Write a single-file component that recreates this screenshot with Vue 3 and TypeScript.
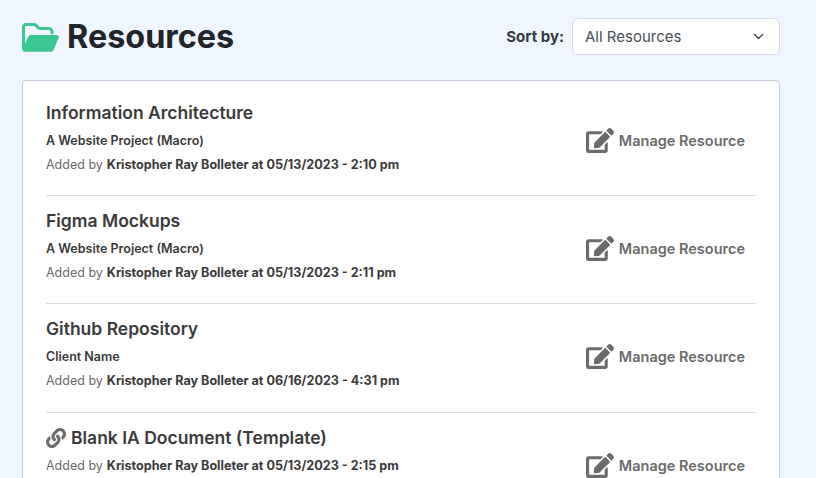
<script setup lang="ts">
interface Item { title: string; sub?: string; by: string; link?: boolean }
const items: Item[] = [
  { title: 'Information Architecture', sub: 'A Website Project (Macro)', by: 'Kristopher Ray Bolleter at 05/13/2023 - 2:10 pm' },
  { title: 'Figma Mockups', sub: 'A Website Project (Macro)', by: 'Kristopher Ray Bolleter at 05/13/2023 - 2:11 pm' },
  { title: 'Github Repository', sub: 'Client Name', by: 'Kristopher Ray Bolleter at 06/16/2023 - 4:31 pm' },
  { title: 'Blank IA Document (Template)', by: 'Kristopher Ray Bolleter at 05/13/2023 - 2:15 pm', link: true },
]
</script>

<template>
  <div class="page">
    <header class="head">
      <h1 class="title">
        <svg class="folder" viewBox="0 0 37 29">
          <path class="folder-tab" d="M1.5 25V4a2.5 2.5 0 0 1 2.5-2.5h8a3 3 0 0 1 2.1.9l2.3 2.3a3 3 0 0 0 2.1.9H27a3 3 0 0 1 3 3V10"/>
          <path class="folder-front" d="M9 12h25.5c1.6 0 2.8 1.6 2.2 3.1l-5.2 12c-.4 1-1.3 1.7-2.3 1.7H3c-2.1 0-3.2-1.9-2.3-3.5L6.3 13.6c.5-1 1.5-1.6 2.7-1.6z"/>
        </svg>
        Resources
      </h1>
      <div class="sort">
        <label class="sort-label">Sort by:</label>
        <div class="select">
          <span>All Resources</span>
          <svg class="chev" viewBox="0 0 16 16"><path d="M3 5.5 8 10.5l5-5" fill="none" stroke="#495057" stroke-width="1.8" stroke-linecap="round" stroke-linejoin="round"/></svg>
        </div>
      </div>
    </header>
    <section class="card">
      <article v-for="item in items" :key="item.title" class="row">
        <div class="info">
          <h2 class="name">
            <svg v-if="item.link" class="link" viewBox="0 0 512 512"><path d="M326.612 185.391c59.747 59.809 58.927 155.698.36 214.59-.11.12-.24.25-.36.37l-67.2 67.2c-59.27 59.27-155.699 59.262-214.96 0-59.27-59.26-59.27-155.7 0-214.96l37.106-37.106c9.84-9.84 26.786-3.3 27.294 10.606.648 17.722 3.826 35.527 9.69 52.721 1.986 5.822.567 12.262-3.783 16.612l-13.087 13.087c-28.026 28.026-28.905 73.66-1.155 101.96 28.024 28.579 74.086 28.749 102.325.51l67.2-67.19c28.191-28.191 28.073-73.757 0-101.83-3.701-3.694-7.429-6.564-10.341-8.569a16.037 16.037 0 0 1-6.947-12.606c-.396-10.567 3.348-21.456 11.698-29.806l21.054-21.055c5.521-5.521 14.182-6.199 20.584-1.731a152.482 152.482 0 0 1 20.522 17.197zM467.547 44.449c-59.261-59.262-155.69-59.27-214.96 0l-67.2 67.2c-.12.12-.25.25-.36.37-58.566 58.892-59.387 154.781.36 214.59a152.454 152.454 0 0 0 20.521 17.196c6.402 4.468 15.064 3.789 20.584-1.731l21.054-21.055c8.35-8.35 12.094-19.239 11.698-29.806a16.037 16.037 0 0 0-6.947-12.606c-2.912-2.005-6.64-4.875-10.341-8.569-28.073-28.073-28.191-73.639 0-101.83l67.2-67.19c28.239-28.239 74.3-28.069 102.325.51 27.75 28.3 26.872 73.934-1.155 101.96l-13.087 13.087c-4.35 4.35-5.769 10.79-3.783 16.612 5.864 17.194 9.042 34.999 9.69 52.721.509 13.906 17.454 20.446 27.294 10.606l37.106-37.106c59.271-59.259 59.271-155.699.001-214.959z"/></svg>
            {{ item.title }}
          </h2>
          <p v-if="item.sub" class="sub">{{ item.sub }}</p>
          <p class="added"><span class="added-by">Added by</span><strong>{{ item.by }}</strong></p>
        </div>
        <a class="manage">
          <svg class="edit" viewBox="0 0 576 512"><path d="M402.6 83.2l90.2 90.2c3.8 3.8 3.8 10 0 13.8L274.4 405.6l-92.8 10.3c-12.4 1.4-22.9-9.1-21.5-21.5l10.3-92.8L388.8 83.2c3.8-3.8 10-3.8 13.8 0zm162-22.9l-48.8-48.8c-15.2-15.2-39.9-15.2-55.2 0l-35.4 35.4c-3.8 3.8-3.8 10 0 13.8l90.2 90.2c3.8 3.8 10 3.8 13.8 0l35.4-35.4c15.2-15.3 15.2-40 0-55.2zM384 346.2V448H64V128h229.8c3.2 0 6.2-1.3 8.5-3.5l40-40c7.6-7.6 2.2-20.5-8.5-20.5H48C21.5 64 0 85.5 0 112v352c0 26.5 21.5 48 48 48h352c26.5 0 48-21.5 48-48V306.2c0-10.7-12.9-16-20.5-8.5l-40 40c-2.2 2.3-3.5 5.3-3.5 8.5z"/></svg>
          Manage Resource
        </a>
      </article>
    </section>
  </div>
</template>

<style>
html, body { margin: 0; background: #f0f6ff; overflow: hidden; }
</style>

<style scoped>
.page {
  height: 478px;
  overflow: hidden;
  box-sizing: border-box;
  padding: 18px 36px 0 22px;
  font-family: Inter, "Liberation Sans", sans-serif;
  color: #3a3a3a;
}
.head {
  display: flex;
  justify-content: space-between;
  align-items: center;
  height: 37px;
  margin-bottom: 24.5px;
}
.title {
  display: flex;
  align-items: center;
  gap: 8px;
  margin: 0;
  font-size: 32.4px;
  line-height: 37px;
  font-weight: 700;
  color: #212529;
}
.folder { width: 37px; height: 29px; margin-top: 1px; }
.folder-tab { fill: none; stroke: #3cc691; stroke-width: 3; stroke-linejoin: round; stroke-linecap: round; }
.folder-front { fill: #3cc691; }
.sort { display: flex; align-items: center; gap: 8px; }
.sort-label { font-size: 15px; font-weight: 700; color: #343a40; }
.select {
  box-sizing: border-box;
  width: 208px;
  height: 37px;
  display: flex;
  justify-content: space-between;
  align-items: center;
  padding: 0 12px;
  background: #fff;
  border: 1px solid #d5d9e8;
  border-radius: 6px;
  font-size: 15px;
  color: #495057;
}
.chev { width: 13px; height: 13px; margin-right: 2px; }
.card {
  background: #fff;
  border: 1px solid #c3cbdf;
  border-radius: 4px;
  padding: 7px 23px 0;
}
.row {
  box-sizing: border-box;
  display: flex;
  justify-content: space-between;
  align-items: center;
  min-height: 108.4px;
  padding: 0 11px 2px 0;
  border-bottom: 1px solid #dcdcdc;
}
.row:last-child { border-bottom: 0; }
.info { display: flex; flex-direction: column; gap: 8px; align-self: flex-start; padding-top: 13px; }
.name {
  display: flex;
  align-items: center;
  gap: 5px;
  margin: 0;
  font-size: 17.5px;
  line-height: 24px;
  font-weight: 600;
  color: #3a3a3a;
}
.link { width: 20px; height: 20px; fill: #6b6b6b; }
.sub { margin: 0; font-size: 12.5px; line-height: 16px; font-weight: 600; color: #3a3a3a; }
.added { margin: 0; font-size: 12.6px; line-height: 16px; color: #6b6b6b; display: flex; gap: 4px; }
.added-by { font-size: 12.5px; }
.added strong { font-weight: 700; color: #3a3a3a; }
.manage {
  display: flex;
  align-items: center;
  gap: 5px;
  font-size: 14.5px;
  font-weight: 600;
  color: #6b6b6b;
}
.edit { width: 28px; height: 25px; fill: #6b6b6b; }
</style>
